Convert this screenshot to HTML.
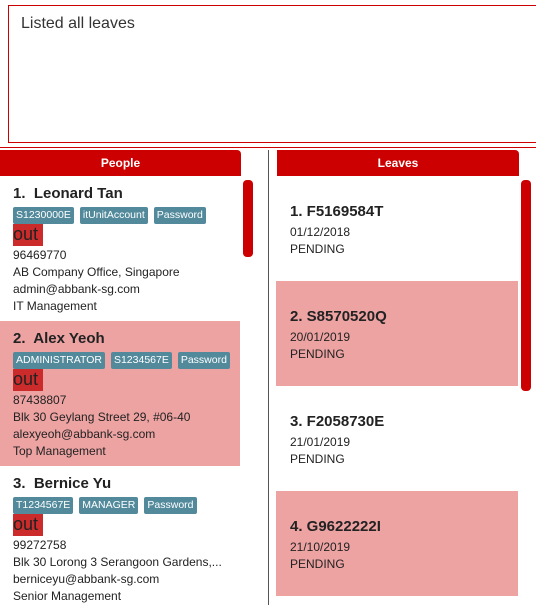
<!DOCTYPE html>
<html><head><style>
*{margin:0;padding:0;box-sizing:border-box}
body{width:536px;height:605px;overflow:hidden;background:#fff;font-family:"Liberation Sans",sans-serif;color:#222;position:relative}
.abs{position:absolute}
.hdr{position:absolute;top:150px;height:26px;background:#cc0000;color:#fff;font-weight:bold;font-size:12px;text-align:center;line-height:26px;border-radius:0 4px 0 0}
.card{position:absolute;left:0;width:240px;height:145px}
.name{position:absolute;left:13px;top:9px;font-size:15px;font-weight:bold;color:#222}
.tags{position:absolute;left:13px;top:31px;white-space:nowrap;height:17px}
.tag{float:left;background:#528a9c;color:#fff;font-size:10.5px;height:17px;line-height:17px;padding:0 3px;border-radius:2px;margin-right:6px}
.out{position:absolute;left:13px;top:48px;width:30px;height:22px;background:#cc2b2b;font-size:18px;line-height:21px;color:#222}
.lines{position:absolute;left:13px;top:71px;font-size:12px;line-height:17px;color:#222;white-space:nowrap}
.leaf{position:absolute;left:276px;width:242px;height:105px}
.lt{position:absolute;left:14px;top:27px;font-size:15px;font-weight:bold;color:#222}
.ls{position:absolute;left:14px;top:48px;font-size:12px;line-height:17px;color:#222}
.pink{background:#eea3a3}
</style></head><body>
<div class="abs" style="left:8px;top:5px;width:540px;height:138px;border:1px solid #cc0000"></div>
<div class="abs" style="left:21px;top:15px;font-size:16px;color:#333">Listed all leaves</div>
<div class="abs" style="left:0;top:147px;width:536px;height:1px;background:#cc0000"></div>
<div class="abs" style="left:268px;top:150px;width:1px;height:455px;background:#555"></div>

<div class="hdr" style="left:0;width:241px">People</div>
<div class="hdr" style="left:277px;width:242px">Leaves</div>

<div class="card" style="top:176px">
<div class="name">1.&nbsp; Leonard Tan</div>
<div class="tags"><span class="tag">S1230000E</span><span class="tag">itUnitAccount</span><span class="tag">Password</span></div>
<div class="out">out</div>
<div class="lines">96469770<br>AB Company Office, Singapore<br>admin@abbank-sg.com<br>IT Management</div>
</div>
<div class="card pink" style="top:321px">
<div class="name">2.&nbsp; Alex Yeoh</div>
<div class="tags"><span class="tag">ADMINISTRATOR</span><span class="tag">S1234567E</span><span class="tag">Password</span></div>
<div class="out">out</div>
<div class="lines">87438807<br>Blk 30 Geylang Street 29, #06-40<br>alexyeoh@abbank-sg.com<br>Top Management</div>
</div>
<div class="card" style="top:466px">
<div class="name">3.&nbsp; Bernice Yu</div>
<div class="tags"><span class="tag">T1234567E</span><span class="tag">MANAGER</span><span class="tag">Password</span></div>
<div class="out">out</div>
<div class="lines">99272758<br>Blk 30 Lorong 3 Serangoon Gardens,...<br>berniceyu@abbank-sg.com<br>Senior Management</div>
</div>
<div class="abs" style="left:243px;top:180px;width:10px;height:77px;background:#cc0000;border-radius:4px"></div>

<div class="leaf" style="top:176px"><div class="lt">1. F5169584T</div><div class="ls">01/12/2018<br>PENDING</div></div>
<div class="leaf pink" style="top:281px"><div class="lt">2. S8570520Q</div><div class="ls">20/01/2019<br>PENDING</div></div>
<div class="leaf" style="top:386px"><div class="lt">3. F2058730E</div><div class="ls">21/01/2019<br>PENDING</div></div>
<div class="leaf pink" style="top:491px"><div class="lt">4. G9622222I</div><div class="ls">21/10/2019<br>PENDING</div></div>
<div class="abs" style="left:521px;top:180px;width:10px;height:211px;background:#cc0000;border-radius:4px"></div>
</body></html>
